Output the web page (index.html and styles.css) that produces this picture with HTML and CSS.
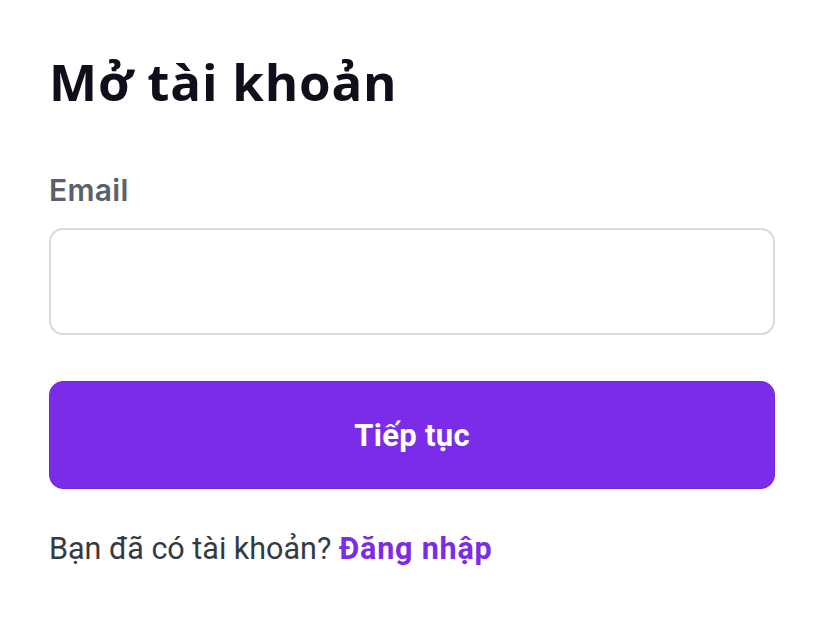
FILE: index.html
```html
<!DOCTYPE html>
<html lang="vi">
<head>
<meta charset="utf-8">
<title>Mở tài khoản</title>
<link rel="stylesheet" href="styles.css">
</head>
<body>
<main class="page">
  <h1 class="title">Mở tài khoản</h1>
  <form class="form">
    <label class="label" for="email">Email</label>
    <input class="input" id="email" type="email">
    <button class="btn" type="button">Tiếp tục</button>
  </form>
  <p class="footer">Bạn đã có tài khoản? <a class="link" href="#">Đăng nhập</a></p>
</main>
</body>
</html>
```

FILE: styles.css
```css
* { box-sizing: border-box; }
html, body { margin: 0; padding: 0; background: #fff; }
body { font-family: Roboto, "Liberation Sans", sans-serif; }
.page {
  width: 726px;
  margin-left: 49px;
  padding-top: 46px;
  display: flex;
  flex-direction: column;
}
.title {
  margin: 0;
  font-family: "Open Sans", Lato, sans-serif;
  font-weight: 700;
  font-size: 51px;
  line-height: 70px;
  color: #0e0f1b;
  letter-spacing: 0.8px;
}
.form {
  display: flex;
  flex-direction: column;
  margin-top: 56px;
}
.label {
  font-family: Inter, Roboto, sans-serif;
  font-size: 30px;
  font-weight: 600;
  color: #5a616b;
  line-height: 36px;
  letter-spacing: 0.3px;
}
.input {
  margin-top: 20px;
  height: 107px;
  border: 2px solid #d9d9de;
  border-radius: 14px;
  background: #fff;
  font-size: 28px;
  padding: 0 24px;
  outline: none;
}
.btn {
  margin-top: 46px;
  height: 108px;
  border: 1px solid #7227db;
  border-radius: 14px;
  background: #7b2ce9;
  color: #fff;
  font-family: Roboto, "Liberation Sans", sans-serif;
  font-weight: 700;
  font-size: 31px;
  letter-spacing: 0.3px;
}
.footer {
  margin: 42px 0 0;
  font-size: 30.5px;
  line-height: 36px;
  color: #353a41;
}
.link {
  color: #7b2ce9;
  font-weight: 700;
  letter-spacing: 0.8px;
  text-decoration: none;
}
```
